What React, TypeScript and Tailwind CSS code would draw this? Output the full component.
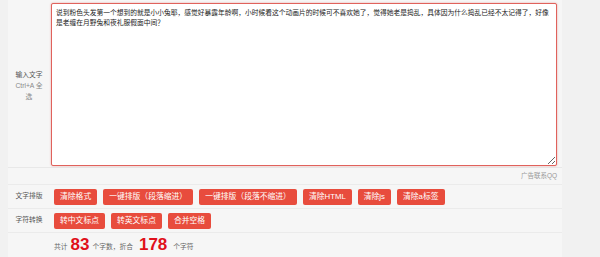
import React, { useEffect, useRef } from "react";

const TEXT =
  "说到粉色头发第一个想到的就是小小兔耶，感觉好暴露年龄啊，小时候看这个动画片的时候可不喜欢她了，觉得她老是捣乱，具体因为什么捣乱已经不太记得了，好像是老缠在月野兔和夜礼服假面中间？";

const font = { fontFamily: '"Liberation Sans", "Noto Sans CJK SC", sans-serif' };

function Btn({ children }: { children: React.ReactNode }) {
  return (
    <button className="h-[16px] px-[6px] rounded-[2px] bg-[#e84c3d] text-white text-[7.8px] leading-[16px] whitespace-nowrap">
      {children}
    </button>
  );
}

export default function App() {
  const ref = useRef<HTMLTextAreaElement>(null);
  useEffect(() => {
    const el = ref.current;
    if (el) {
      el.focus();
      el.setSelectionRange(TEXT.length, TEXT.length);
    }
  }, []);
  return (
    <div className="w-[600px] h-[257px] bg-[#f1f1f1] overflow-hidden text-[#555]" style={font}>
      <div className="ml-[8px] w-[554px] bg-[#f6f6f6]">
        {/* row 1 */}
        <div className="grid grid-cols-[42px_1fr] border-b border-[#e8e8e8] h-[168px]">
          <div className="flex flex-col items-center justify-center text-[6.75px] leading-[11px] text-center pt-[4px] px-[4px]">
            <span className="text-[#555]">输入文字</span>
            <span className="text-[#888]">Ctrl+A 全</span>
            <span className="text-[#888]">选</span>
          </div>
          <div className="pt-[3px] pl-[1px] pr-[5px]">
            <textarea
              ref={ref}
              className="block w-full h-[163px] resize-y bg-white rounded-[2px] border border-[#e0625c] shadow-[0_0_2px_rgba(224,98,92,0.6)] pl-[4px] pr-[4px] pt-[4px] text-[6.75px] leading-[10px] text-[#222] outline-none caret-[#333]"
              defaultValue={TEXT}
              style={font}
            />
          </div>
        </div>
        {/* row 2 */}
        <div className="grid grid-cols-[42px_1fr] border-b border-[#ebebeb] h-[17px]">
          <div />
          <div className="flex items-center justify-end pr-[5px] text-[6.5px] text-[#999]">广告联系QQ</div>
        </div>
        {/* row 3 */}
        <div className="grid grid-cols-[42px_1fr] border-b border-[#ebebeb] h-[24px]">
          <div className="flex items-center justify-center text-[6.75px] text-[#555]">文字排版</div>
          <div className="flex items-center gap-[6px] pl-[4px]">
            <Btn>清除格式</Btn>
            <Btn>一键排版（段落缩进）</Btn>
            <Btn>一键排版（段落不缩进）</Btn>
            <Btn>清除HTML</Btn>
            <Btn>清除js</Btn>
            <Btn>清除a标签</Btn>
          </div>
        </div>
        {/* row 4 */}
        <div className="grid grid-cols-[42px_1fr] border-b border-[#ebebeb] h-[24px]">
          <div className="flex items-center justify-center text-[6.75px] text-[#555]">字符转换</div>
          <div className="flex items-center gap-[6px] pl-[4px]">
            <Btn>转中文标点</Btn>
            <Btn>转英文标点</Btn>
            <Btn>合并空格</Btn>
          </div>
        </div>
        {/* row 5 */}
        <div className="grid grid-cols-[42px_1fr] h-[24px]">
          <div />
          <div className="flex items-end pl-[4px] pb-[4px] text-[6.75px] text-[#666] leading-none">
            <span className="mb-[2px]">共计</span>
            <span className="mx-[3px] text-[17px] font-bold text-[#e0101a] leading-none">83</span>
            <span className="mb-[2px]">个字数，折合</span>
            <span className="mx-[6px] text-[17px] font-bold text-[#e0101a] leading-none">178</span>
            <span className="mb-[2px]">个字符</span>
          </div>
        </div>
      </div>
    </div>
  );
}
